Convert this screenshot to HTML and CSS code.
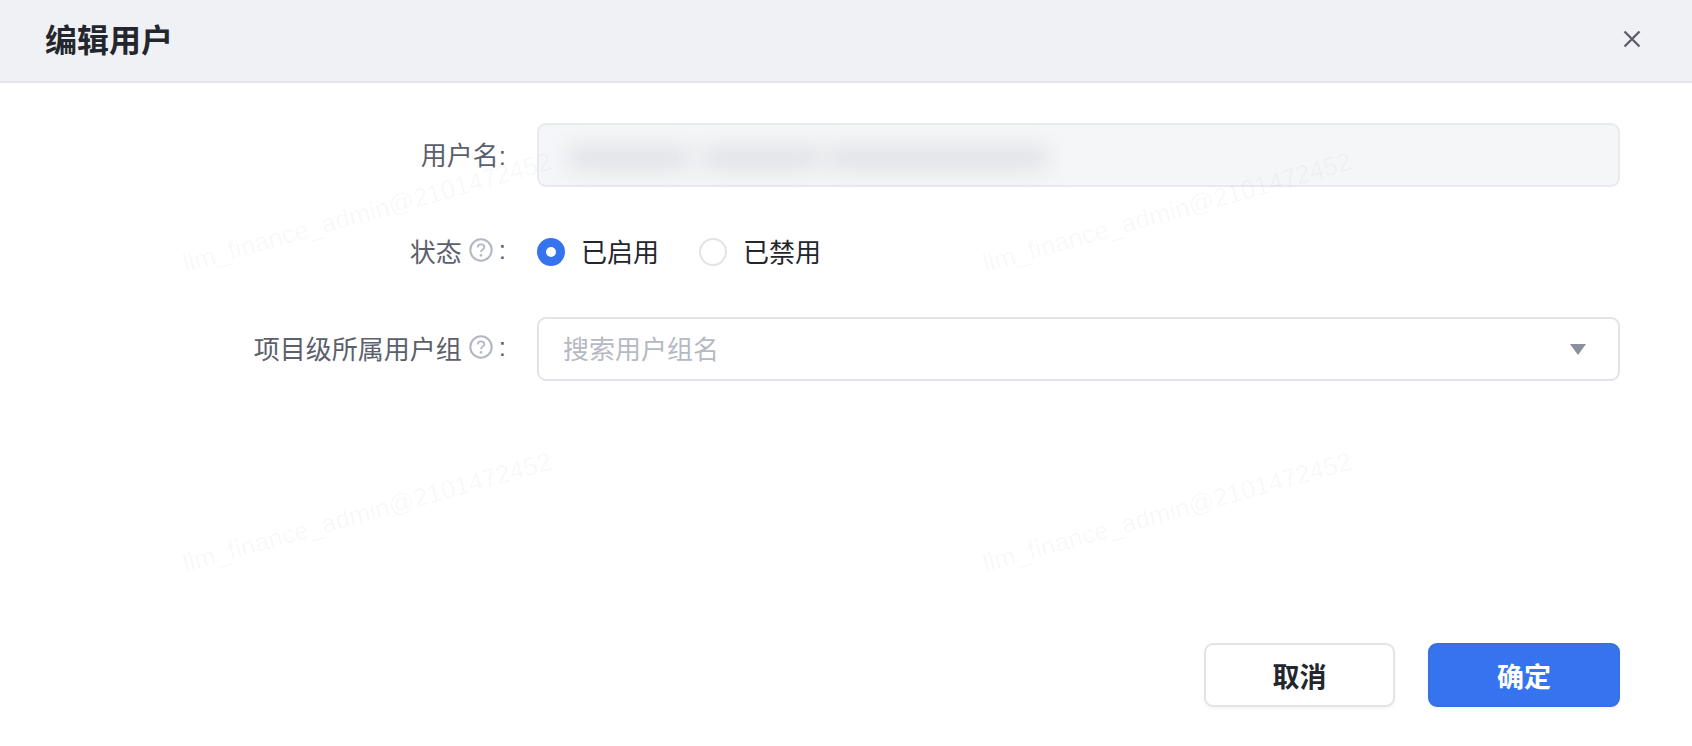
FILE: index.html
```html
<!DOCTYPE html>
<html lang="zh-CN">
<head>
    <meta charset="UTF-8">
    <meta name="viewport" content="width=device-width, initial-scale=1.0">
    <title>编辑用户</title>
    <link rel="stylesheet" href="styles.css">
</head>
<body>

<div class="modal">
    <div class="modal-header">
        <h2 class="modal-title">编辑用户</h2>
        <svg class="close-icon" viewBox="0 0 18 18" width="18" height="18">
            <path d="M1.5 1.5 L16.5 16.5 M16.5 1.5 L1.5 16.5" fill="none" stroke="#5a5e6b" stroke-width="2.3"/>
        </svg>
    </div>

    <div class="modal-body">
        <div class="form-row">
            <div class="form-label"><span>用户名:</span></div>
            <div class="input-box input-disabled">
                <div class="blur-bar bar-one"></div>
                <div class="blur-bar bar-two"></div>
                <div class="blur-bar bar-three"></div>
            </div>
        </div>

        <div class="form-row">
            <div class="form-label">
                <span>状态</span>
                <svg class="help-icon" viewBox="0 0 22 22" width="24" height="24">
                    <circle cx="11" cy="11" r="9.8" fill="none" stroke="#b4b8c5" stroke-width="1.9"/>
                    <path d="M8 8.6 C8 6.7 9.4 5.8 11 5.8 C12.7 5.8 14 6.8 14 8.4 C14 10.5 11 10.6 11 13" fill="none" stroke="#b4b8c5" stroke-width="1.7"/>
                    <circle cx="11" cy="15.9" r="1.2" fill="#b4b8c5"/>
                </svg>
                <span class="colon">:</span>
            </div>
            <div class="radio-group">
                <label class="radio"><span class="radio-dot radio-on"></span><span class="radio-text">已启用</span></label>
                <label class="radio"><span class="radio-dot"></span><span class="radio-text">已禁用</span></label>
            </div>
        </div>

        <div class="form-row">
            <div class="form-label">
                <span>项目级所属用户组</span>
                <svg class="help-icon" viewBox="0 0 22 22" width="24" height="24">
                    <circle cx="11" cy="11" r="9.8" fill="none" stroke="#b4b8c5" stroke-width="1.9"/>
                    <path d="M8 8.6 C8 6.7 9.4 5.8 11 5.8 C12.7 5.8 14 6.8 14 8.4 C14 10.5 11 10.6 11 13" fill="none" stroke="#b4b8c5" stroke-width="1.7"/>
                    <circle cx="11" cy="15.9" r="1.2" fill="#b4b8c5"/>
                </svg>
                <span class="colon">:</span>
            </div>
            <div class="input-box input-select">
                <span class="placeholder">搜索用户组名</span>
                <span class="caret"></span>
            </div>
        </div>
    </div>

    <div class="modal-footer">
        <button class="btn">取消</button>
        <button class="btn btn-primary">确定</button>
    </div>

    <div class="watermarks">
        <div class="watermark">llm_finance_admin@2101472452</div>
        <div class="watermark">llm_finance_admin@2101472452</div>
        <div class="watermark">llm_finance_admin@2101472452</div>
        <div class="watermark">llm_finance_admin@2101472452</div>
    </div>
</div>

</body>
</html>
```

FILE: styles.css
```css
/* Base */
html, body {
    margin: 0;
    height: 100%;
}
body {
    font-family: "Liberation Sans", "Noto Sans CJK SC", sans-serif;
    color: #24262e;
    background-color: #fff;
    overflow: hidden;
}
.modal {
    position: relative;
    height: 746px;
    display: flex;
    flex-direction: column;
    overflow: hidden;
}

/* Header */
.modal-header {
    height: 81px;
    flex-shrink: 0;
    display: flex;
    justify-content: space-between;
    align-items: center;
    padding: 0 51px 0 45px;
    background-color: #f0f1f5;
    border-bottom: 2px solid #e3e5ea;
}
.modal-title {
    margin: 0 0 5px;
    font-size: 32px;
    font-weight: 600;
    color: #24262e;
}
.close-icon {
    margin-top: -3px;
}

/* Form */
.modal-body {
    flex: 1;
    display: flex;
    flex-direction: column;
    gap: 33px;
    padding: 40px 72px 0 0;
}
.form-row {
    display: flex;
    align-items: center;
    height: 64px;
}
.form-label {
    width: 506px;
    margin-right: 31px;
    padding-bottom: 4px;
    flex-shrink: 0;
    display: flex;
    justify-content: flex-end;
    align-items: center;
    font-size: 26px;
    color: #5c606c;
}
.help-icon {
    margin-left: 7px;
}
.colon {
    margin-left: 6px;
}
.input-box {
    flex: 1;
    height: 64px;
    box-sizing: border-box;
    display: flex;
    align-items: center;
    border: 2px solid #e3e4ea;
    border-radius: 9px;
}

/* Blurred user name */
.input-disabled {
    background-color: #f5f6f8;
    border-color: #e9eaee;
    padding: 6px 0 0 30px;
}
.blur-bar {
    height: 20px;
    background-color: #dddee3;
    filter: blur(11px);
}
.bar-one {
    width: 120px;
}
.bar-two {
    width: 116px;
    margin-left: 14px;
}
.bar-three {
    width: 220px;
    margin-left: 8px;
}

.input-select {
    justify-content: space-between;
    padding: 0 32px 4px 24px;
}
.placeholder {
    font-size: 26px;
    color: #b5b9c4;
}
.caret {
    width: 0;
    height: 0;
    margin-top: 4px;
    border-left: 8px solid transparent;
    border-right: 8px solid transparent;
    border-top: 11px solid #8b8f9e;
}

/* Radios */
.radio-group {
    display: flex;
    gap: 40px;
}
.radio {
    display: flex;
    align-items: center;
    gap: 16px;
    font-size: 26px;
    color: #24262e;
}
.radio-text {
    margin-bottom: 4px;
}
.radio-dot {
    width: 28px;
    height: 28px;
    box-sizing: border-box;
    border: 2px solid #e3e4ea;
    border-radius: 50%;
    background-color: #fff;
}
.radio-on {
    border: 9px solid #3574ee;
}

/* Footer */
.modal-footer {
    display: flex;
    justify-content: flex-end;
    gap: 33px;
    padding: 0 72px 39px 0;
}
.btn {
    width: 191px;
    height: 64px;
    box-sizing: border-box;
    font-family: inherit;
    font-size: 27px;
    font-weight: 600;
    color: #24262e;
    background-color: #fff;
    border: 2px solid #e3e4e8;
    border-radius: 9px;
    box-shadow: 0 2px 3px rgba(0, 0, 0, 0.04);
}
.btn-primary {
    width: 192px;
    color: #fff;
    background-color: #3574ee;
    border-color: #3a70dd;
}

/* Watermark layer */
.watermarks {
    position: absolute;
    top: 62px;
    left: -33px;
    display: grid;
    grid-template-columns: 800px 800px;
    grid-auto-rows: 300px;
    pointer-events: none;
}
.watermark {
    display: flex;
    justify-content: center;
    align-items: center;
    height: 300px;
    font-size: 25.6px;
    color: rgba(30, 35, 60, 0.04);
    white-space: nowrap;
    transform: rotate(-15.7deg);
}
```
